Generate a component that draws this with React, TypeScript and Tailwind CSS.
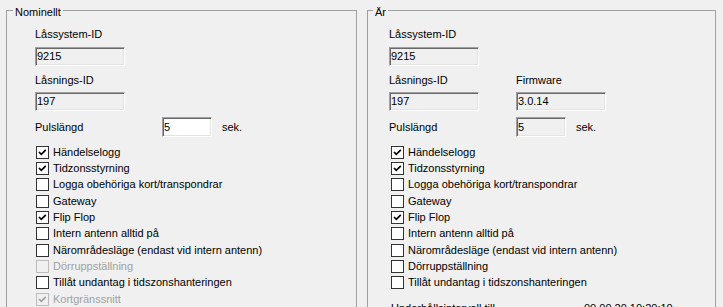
import React from 'react';

interface CheckItem {
  label: string;
  checked?: boolean;
  disabled?: boolean;
}

const leftItems: CheckItem[] = [
  { label: 'Händelselogg', checked: true },
  { label: 'Tidzonsstyrning', checked: true },
  { label: 'Logga obehöriga kort/transpondrar' },
  { label: 'Gateway' },
  { label: 'Flip Flop', checked: true },
  { label: 'Intern antenn alltid på' },
  { label: 'Närområdesläge (endast vid intern antenn)' },
  { label: 'Dörruppställning', disabled: true },
  { label: 'Tillåt undantag i tidszonshanteringen' },
  { label: 'Kortgränssnitt', checked: true, disabled: true },
];

const rightItems: CheckItem[] = [
  { label: 'Händelselogg', checked: true },
  { label: 'Tidzonsstyrning', checked: true },
  { label: 'Logga obehöriga kort/transpondrar' },
  { label: 'Gateway' },
  { label: 'Flip Flop', checked: true },
  { label: 'Intern antenn alltid på' },
  { label: 'Närområdesläge (endast vid intern antenn)' },
  { label: 'Dörruppställning' },
  { label: 'Tillåt undantag i tidszonshanteringen' },
];

const sunken =
  'border border-t-[#a0a0a0] border-l-[#a0a0a0] border-r-white border-b-white shadow-[inset_1px_1px_0_#696969,inset_-1px_-1px_0_#e3e3e3] flex items-center pl-[1px]';

const Field: React.FC<{ value: string; width: string; white?: boolean; tall?: boolean }> = ({ value, width, white, tall }) => (
  <div className={`${sunken} ${width} ${tall ? 'h-[20px]' : 'h-[19px]'} ${white ? 'bg-white' : 'bg-[#f0f0f0]'}`}>{value}</div>
);

const CheckBox: React.FC<{ item: CheckItem }> = ({ item }) => (
  <div className="h-[16.33px] flex items-center">
    <div
      className={`w-[13px] h-[13px] border flex items-center justify-center ${
        item.disabled ? 'border-[#bcbcbc] bg-[#f0f0f0]' : 'border-[#333333] bg-white'
      }`}
    >
      {item.checked && (
        <svg width="11" height="11" viewBox="0 0 11 11">
          <polyline
            points="2,5 4.3,7.3 8.8,2.8"
            fill="none"
            stroke={item.disabled ? '#a0a0a0' : '#000'}
            strokeWidth="1.7"
          />
        </svg>
      )}
    </div>
    <span className={`ml-[4px] leading-[13px] ${item.disabled ? 'text-[#a0a0a0]' : ''}`}>{item.label}</span>
  </div>
);

export default function App() {
  return (
    <div className="w-[723px] h-[307px] overflow-hidden bg-[#f0f0f0] flex gap-[10px] pl-[6px] pt-[1px] text-[11px] leading-[13px] text-black font-['Liberation_Sans',Arial,sans-serif]">
      {/* Nominellt */}
      <fieldset className="w-[351px] h-[400px] shrink-0 border border-[#a0a0a0]">
        <legend className="ml-[6px] px-[2px] pt-[5px] leading-[13px]">Nominellt</legend>
        <div className="pl-[28px] pt-[9px] flex flex-col">
          <div className="h-[13px]">Låssystem-ID</div>
          <div className="mt-[6px]">
            <Field value="9215" width="w-[90px]" />
          </div>
          <div className="h-[13px] mt-[8px]">Låsnings-ID</div>
          <div className="mt-[5px]">
            <Field value="197" width="w-[90px]" />
          </div>
          <div className="mt-[6px] flex items-center">
            <div className="w-[127px]">Pulslängd</div>
            <Field value="5" width="w-[50px]" white tall />
            <span className="ml-[10px]">sek.</span>
          </div>
          <div className="mt-[7px] pl-[1px] flex flex-col">
            {leftItems.map(item => (
              <CheckBox key={item.label} item={item} />
            ))}
          </div>
        </div>
      </fieldset>

      {/* Är */}
      <fieldset className="w-[349px] h-[400px] shrink-0 border border-[#a0a0a0]">
        <legend className="ml-[5px] px-[2px] pt-[5px] leading-[13px]">Är</legend>
        <div className="pl-[21px] pt-[9px] flex flex-col">
          <div className="h-[13px]">Låssystem-ID</div>
          <div className="mt-[6px]">
            <Field value="9215" width="w-[90px]" />
          </div>
          <div className="mt-[8px] grid grid-cols-[127px_90px]">
            <div className="h-[13px]">Låsnings-ID</div>
            <div className="h-[13px]">Firmware</div>
            <div className="mt-[5px]">
              <Field value="197" width="w-[90px]" />
            </div>
            <div className="mt-[5px]">
              <Field value="3.0.14" width="w-[90px]" />
            </div>
          </div>
          <div className="mt-[6px] flex items-center">
            <div className="w-[127px]">Pulslängd</div>
            <Field value="5" width="w-[50px]" tall />
            <span className="ml-[10px]">sek.</span>
          </div>
          <div className="mt-[7px] pl-[2px] flex flex-col">
            {rightItems.map(item => (
              <CheckBox key={item.label} item={item} />
            ))}
          </div>
          <div className="mt-[11px] pl-[2px] flex">
            <span className="w-[193px]">Underhållsintervall till</span>
            <span>00.00.20 10:20:10</span>
          </div>
        </div>
      </fieldset>
    </div>
  );
}
